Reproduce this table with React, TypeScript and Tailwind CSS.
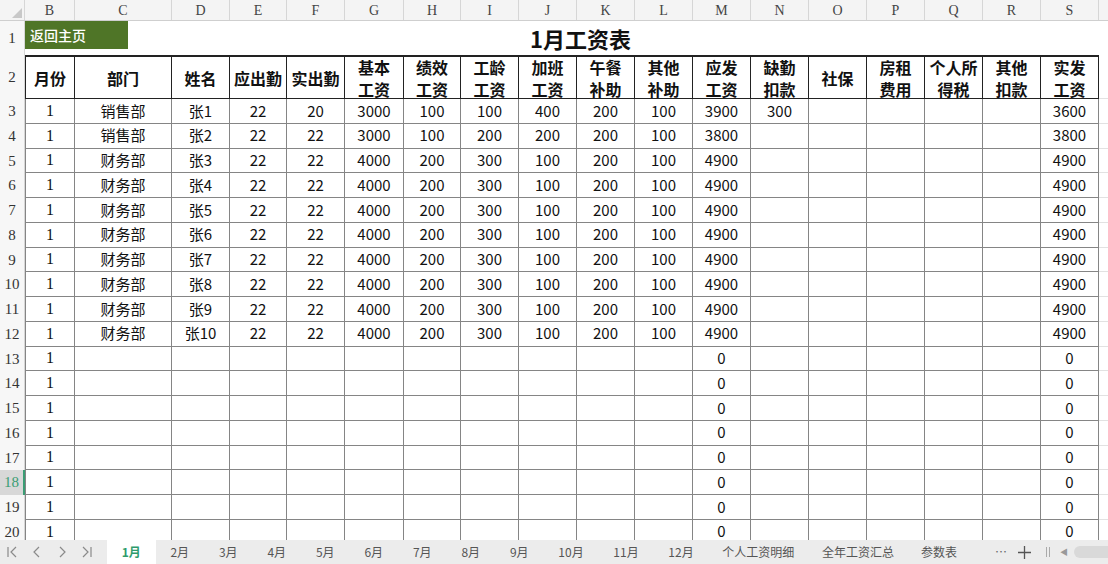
import React from "react";

const SANS = "font-['Liberation_Sans','Noto_Sans_CJK_SC',sans-serif]";
const CJK = "font-['Noto_Sans_CJK_SC','Noto_Sans',sans-serif]";
const SERIF = "font-['Liberation_Serif','Noto_Sans_CJK_SC',serif]";

// B..S 列宽
const widths = [50, 97, 58, 57, 58, 59, 57, 58, 58, 58, 58, 58, 58, 58, 58, 58, 58, 58];
const letters = ["B", "C", "D", "E", "F", "G", "H", "I", "J", "K", "L", "M", "N", "O", "P", "Q", "R", "S"];

const headers = [
  ["月份"], ["部门"], ["姓名"], ["应出勤"], ["实出勤"],
  ["基本", "工资"], ["绩效", "工资"], ["工龄", "工资"], ["加班", "工资"],
  ["午餐", "补助"], ["其他", "补助"], ["应发", "工资"], ["缺勤", "扣款"],
  ["社保"], ["房租", "费用"], ["个人所", "得税"], ["其他", "扣款"], ["实发", "工资"],
];

function buildRows(): string[][] {
  const rows: string[][] = [];
  rows.push(["1", "销售部", "张1", "22", "20", "3000", "100", "100", "400", "200", "100", "3900", "300", "", "", "", "", "3600"]);
  rows.push(["1", "销售部", "张2", "22", "22", "3000", "100", "200", "200", "200", "100", "3800", "", "", "", "", "", "3800"]);
  for (let i = 3; i <= 10; i++) {
    rows.push(["1", "财务部", `张${i}`, "22", "22", "4000", "200", "300", "100", "200", "100", "4900", "", "", "", "", "", "4900"]);
  }
  for (let i = 0; i < 8; i++) {
    rows.push(["1", "", "", "", "", "", "", "", "", "", "", "0", "", "", "", "", "", "0"]);
  }
  return rows;
}

const tabs: { label: string; w: string }[] = [
  { label: "2月", w: "w-[48.5px]" },
  { label: "3月", w: "w-[48.5px]" },
  { label: "4月", w: "w-[48.5px]" },
  { label: "5月", w: "w-[48.5px]" },
  { label: "6月", w: "w-[48.5px]" },
  { label: "7月", w: "w-[48.5px]" },
  { label: "8月", w: "w-[48.5px]" },
  { label: "9月", w: "w-[48.5px]" },
  { label: "10月", w: "w-[55px]" },
  { label: "11月", w: "w-[55px]" },
  { label: "12月", w: "w-[55px]" },
  { label: "个人工资明细", w: "w-[99.5px]" },
  { label: "全年工资汇总", w: "w-[100px]" },
  { label: "参数表", w: "w-[62px]" },
];

function NavIcon({ d }: { d: string }) {
  return (
    <svg width="14" height="14" viewBox="0 0 14 14" fill="none" stroke="#8a8a8a" strokeWidth="1.2">
      <path d={d} />
    </svg>
  );
}

export default function App() {
  const rows = buildRows();

  return (
    <div className={`w-[1108px] h-[564px] overflow-hidden bg-white flex flex-col ${SANS}`}>
      <div className="flex-1 min-h-0 overflow-hidden flex flex-col">
        {/* 列标 */}
        <div className="flex h-[21px] shrink-0 bg-[#f4f4f4] border-b border-[#cfcfcf]">
          <div className="w-[25px] shrink-0 border-r border-[#d6d6d6] relative">
            <svg className="absolute right-[2px] bottom-[2px]" width="10" height="10" viewBox="0 0 10 10">
              <path d="M10 0 L10 10 L0 10 Z" fill="#c8c8c8" />
            </svg>
          </div>
          {letters.map((l, i) => (
            <div
              key={l}
              style={{ width: widths[i] }}
              className={`shrink-0 border-r border-[#d6d6d6] flex items-center justify-center text-[14px] text-[#444] ${SERIF}`}
            >
              {l}
            </div>
          ))}
          <div className="flex-1" />
        </div>

        {/* 第1行 */}
        <div className="flex h-[34px] shrink-0">
          <div className={`w-[25px] shrink-0 bg-[#f7f7f7] border-r border-[#d6d6d6] flex items-center justify-center text-[15px] text-[#333] ${SERIF}`}>
            1
          </div>
          <div className="flex-1 flex items-start">
            <div className={`w-[103px] h-[28px] bg-[#4f7527] text-white text-[14px] font-medium flex items-center pl-[5px] ${CJK}`}>
              返回主页
            </div>
            <div className={`flex-1 flex justify-center pl-[28px] pt-[1px] text-[22px] font-bold text-[#111] ${CJK}`}>
              <span className="-ml-[103px]">1月工资表</span>
            </div>
          </div>
        </div>

        {/* 表头 */}
        <div className="flex h-[44px] shrink-0">
          <div className={`w-[25px] shrink-0 bg-[#f7f7f7] border-r border-[#d6d6d6] flex items-center justify-center text-[15px] text-[#333] ${SERIF}`}>
            2
          </div>
          {headers.map((h, i) => (
            <div
              key={i}
              style={{ width: widths[i] }}
              className={`shrink-0 border-t-2 border-r border-b border-[#222] flex flex-col items-center justify-center text-[16px] font-bold leading-[22px] text-[#111] ${CJK} ${i === 0 ? "border-l" : ""}`}
            >
              {h.map((t, j) => (
                <span key={j} className="whitespace-nowrap">{t}</span>
              ))}
            </div>
          ))}
          <div className="flex-1 border-b border-[#e2e2e2]" />
        </div>

        {/* 数据 */}
        {rows.map((r, ri) => {
          const num = ri + 3;
          const sel = num === 18;
          return (
            <div key={ri} className="flex h-[24.75px] shrink-0">
              <div
                className={`w-[25px] shrink-0 flex items-center justify-center text-[15px] ${SERIF} ${
                  sel
                    ? "bg-[#d8d8d8] text-[#3a9d74] border-r-2 border-[#3a9d74]"
                    : "bg-[#f7f7f7] text-[#333] border-r border-[#d6d6d6]"
                }`}
              >
                {num}
              </div>
              {r.map((v, ci) => (
                <div
                  key={ci}
                  style={{ width: widths[ci] }}
                  className={`shrink-0 border-r border-b border-[#858585] flex items-center justify-center text-[15px] text-[#111] ${
                    ci === 0 ? `border-l ${SERIF} text-[16px]` : CJK
                  }`}
                >
                  {v}
                </div>
              ))}
              <div className="flex-1 border-b border-[#e2e2e2]" />
            </div>
          );
        })}
      </div>

      {/* 工作表标签 */}
      <div className={`h-[24px] shrink-0 bg-[#ececec] flex items-center text-[12px] text-[#555] ${CJK}`}>
        <div className="w-[107px] shrink-0 flex items-center gap-[11px] pl-[5px]">
          <NavIcon d="M3 2 L3 12 M11 2 L6 7 L11 12" />
          <NavIcon d="M9 2 L4 7 L9 12" />
          <NavIcon d="M5 2 L10 7 L5 12" />
          <NavIcon d="M3 2 L8 7 L3 12 M11 2 L11 12" />
        </div>
        <div className="w-[48.5px] h-full bg-white flex items-center justify-center font-bold text-[#2e9b6c]">1月</div>
        {tabs.map((t) => (
          <div key={t.label} className={`${t.w} h-full shrink-0 flex items-center justify-center`}>
            {t.label}
          </div>
        ))}
        <div className="w-[22px] text-center text-[#666] shrink-0 ml-[20px]">⋯</div>
        <div className="w-[24px] flex justify-center shrink-0">
          <svg width="13" height="13" viewBox="0 0 13 13" stroke="#555" strokeWidth="1.3">
            <path d="M6.5 0 V13 M0 6.5 H13" />
          </svg>
        </div>
        <div className="w-[24px] flex justify-center shrink-0 gap-[2px]">
          <span className="w-px h-[10px] bg-[#aaa]" />
          <span className="w-px h-[10px] bg-[#aaa]" />
        </div>
        <div className="w-[14px] text-[8px] text-[#999] shrink-0">◀</div>
        <div className="flex-1 h-[12px] rounded-l-full bg-[#d9d9d9]" />
      </div>
    </div>
  );
}
